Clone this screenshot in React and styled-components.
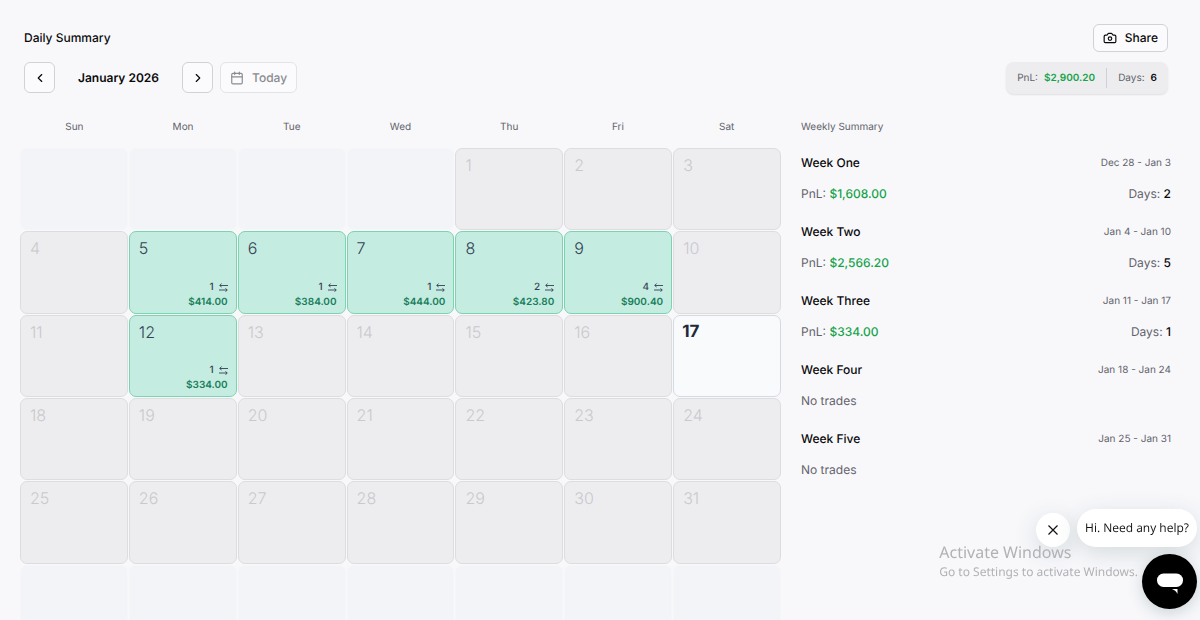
import styled, { createGlobalStyle } from "styled-components";
import { useState } from "react";
import { Calendar, Camera, ChevronLeft, ChevronRight } from "lucide-react";

const GlobalStyle = createGlobalStyle`
  *, *::before, *::after {
    box-sizing: border-box;
  }

  body {
    margin: 0;
    background: #f8f8fb;
    color: #09090b;
    font-family: Inter, "Liberation Sans", sans-serif;
    font-size: 12px;
    line-height: 20px;
    text-rendering: geometricPrecision;
  }

  button {
    font: inherit;
    text-rendering: inherit;
    cursor: pointer;
  }

  h1, h2, h3, p, ul {
    margin: 0;
    padding: 0;
    font: inherit;
    list-style: none;
  }
`;

const Page = styled.main`
  height: 100vh;
  overflow: hidden;
  padding: 24px 29px 0 20px;
`;

const TopBar = styled.header`
  display: flex;
  align-items: center;
  justify-content: space-between;
  padding: 0 3px 0 4px;
  margin-bottom: 10px;
`;

const Title = styled.h1`
  font-weight: 500;
`;

const OutlineButton = styled.button`
  display: flex;
  align-items: center;
  justify-content: center;
  gap: 8px;
  height: ${(props) => props.$height || 31}px;
  padding: 0 9px;
  background: #fbfbfd;
  border: 1px solid #d1d1d6;
  border-radius: 6px;
  color: #09090b;
  font-weight: 500;

  &:disabled {
    border-color: #e4e4e7;
    color: #8b8b90;
    cursor: default;
  }
`;

const SquareButton = styled(OutlineButton)`
  width: 31px;
  padding: 0;
`;

const Toolbar = styled(TopBar)`
  align-items: flex-start;
  margin-bottom: 23px;
`;

const MonthNav = styled.div`
  display: flex;
  align-items: center;
  gap: 7px;
`;

const Month = styled.h2`
  width: 113px;
  text-align: center;
  font-weight: 600;
`;

const Totals = styled.div`
  display: flex;
  align-items: center;
  height: 32px;
  padding: 0 11px;
  background: #ededef;
  border-radius: 8px;
  box-shadow: 0 1px 2px rgba(0, 0, 0, 0.1);
  font-size: 10px;
  color: #63636b;
`;

const Total = styled.span`
  display: flex;
  gap: 6px;

  & + & {
    margin-left: 11px;
    padding-left: 11px;
    border-left: 1px solid #cfcfd4;
  }
`;

const Amount = styled.strong`
  font-weight: ${(props) => props.$weight || 500};
  color: ${(props) => (props.$profit ? "#16a34a" : "#09090b")};
`;

const Content = styled.div`
  display: grid;
  grid-template-columns: 761fr 370fr;
  column-gap: 20px;
  align-items: start;
`;

const Weekdays = styled.div`
  display: grid;
  grid-template-columns: repeat(7, 1fr);
  margin-bottom: 11px;
  text-align: center;
  font-size: 10px;
  color: #63636b;
`;

const Days = styled.div`
  display: grid;
  grid-template-columns: repeat(7, 1fr);
  gap: 1px;
`;

const cellColors = {
  outside: { background: "#f3f4f8", border: "#f5f6f9", text: "transparent" },
  empty: { background: "#ededef", border: "#dddddf", text: "#c9c9cd" },
  profit: { background: "#c5ece0", border: "#7dd3b0", text: "#334155" },
  today: { background: "#f9fafc", border: "#d5dae2", text: "#1e293b" }
};

const Day = styled.div`
  display: flex;
  flex-direction: column;
  justify-content: space-between;
  aspect-ratio: 1.31;
  padding: ${(props) => (props.$kind === "today" ? "6px 8px" : "6px 8px 3px 9px")};
  background: ${(props) => cellColors[props.$kind].background};
  border: 1px solid ${(props) => cellColors[props.$kind].border};
  border-radius: 7px;
  color: ${(props) => cellColors[props.$kind].text};
`;

const DayNumber = styled.span`
  font-size: ${(props) => (props.$today ? 17 : 16)}px;
  font-weight: ${(props) => (props.$today ? 700 : 300)};
`;

const Result = styled.div`
  text-align: right;
  font-size: 10px;
  font-weight: 600;
  line-height: 15px;
  color: #177e5b;
`;

const Trades = styled.div`
  display: flex;
  align-items: center;
  justify-content: flex-end;
  gap: 5px;
  font-weight: 500;
  color: #334155;
`;

const WeeklyTitle = styled.h2`
  margin-bottom: 16px;
  font-size: 10px;
  color: #63636b;
`;

const Weeks = styled.ul`
  display: grid;
  gap: 18px;
`;

const Week = styled.li`
  display: grid;
  gap: 11px;
`;

const WeekRow = styled.div`
  display: flex;
  justify-content: space-between;
  color: #63636b;
`;

const WeekName = styled.h3`
  font-weight: 500;
  color: #09090b;
`;

const WeekRange = styled.span`
  font-size: 10px;
`;

const Chat = styled.aside`
  position: fixed;
  right: 3px;
  bottom: 11px;
  display: flex;
  flex-direction: column;
  align-items: flex-end;
  gap: 7px;
`;

const ChatRow = styled.div`
  display: flex;
  align-items: flex-end;
  gap: 7px;
`;

const ChatBubble = styled.button`
  height: 38px;
  padding: 0 8px;
  background: #fff;
  border: 0;
  border-radius: 19px;
  box-shadow: 0 6px 24px rgba(30, 70, 70, 0.16);
  color: #111;
  font-family: "Open Sans", "Noto Sans", sans-serif;
  font-size: 12px;
  white-space: nowrap;
`;

const ChatDismiss = styled(ChatBubble)`
  display: grid;
  place-items: center;
  width: 34px;
  height: 34px;
  padding: 0;
`;

const ChatLauncher = styled.button`
  width: 55px;
  height: 55px;
  padding: 0;
  background: #000;
  border: 0;
  border-radius: 50%;
  box-shadow: 0 4px 16px rgba(30, 70, 70, 0.2);

  svg {
    display: block;
  }
`;

const Activation = styled.div`
  position: fixed;
  right: 62px;
  bottom: 39px;
  color: #b1b2b5;
  font-family: "Noto Sans", "Open Sans", sans-serif;
  font-size: 12px;
  line-height: 18px;
  pointer-events: none;
`;

const ActivationTitle = styled.p`
  font-size: 16px;
  line-height: 22px;
`;

const weekdays = ["Sun", "Mon", "Tue", "Wed", "Thu", "Fri", "Sat"];

const results = {
  5: { trades: 1, pnl: "$414.00" },
  6: { trades: 1, pnl: "$384.00" },
  7: { trades: 1, pnl: "$444.00" },
  8: { trades: 2, pnl: "$423.80" },
  9: { trades: 4, pnl: "$900.40" },
  12: { trades: 1, pnl: "$334.00" }
};

const weeks = [
  { name: "Week One", range: "Dec 28 - Jan 3", pnl: "$1,608.00", days: 2 },
  { name: "Week Two", range: "Jan 4 - Jan 10", pnl: "$2,566.20", days: 5 },
  { name: "Week Three", range: "Jan 11 - Jan 17", pnl: "$334.00", days: 1 },
  { name: "Week Four", range: "Jan 18 - Jan 24" },
  { name: "Week Five", range: "Jan 25 - Jan 31" }
];

const FIRST_WEEKDAY = 4;
const DAYS_IN_MONTH = 31;
const TODAY = 17;

// six full weeks, days outside the month are null
const cells = Array.from({ length: 42 }, (_, index) => {
  const day = index - FIRST_WEEKDAY + 1;
  return day >= 1 && day <= DAYS_IN_MONTH ? day : null;
});

const getKind = (day) => {
  if (!day) return "outside";
  if (day === TODAY) return "today";
  return results[day] ? "profit" : "empty";
};

const SwapIcon = () => (
  <svg
    width="9"
    height="9"
    viewBox="0 0 9 9"
    fill="none"
    stroke="currentColor"
    strokeWidth="0.9"
    aria-hidden="true"
  >
    <path d="M9 2.500H1M2.600 0.500 0.700 2.500l1.900 1.500M0 7h8M6.400 5.500l1.900 1.500-1.900 1.800" />
  </svg>
);

const CloseIcon = () => (
  <svg width="10" height="10" viewBox="0 0 10 10" stroke="#111" strokeWidth="1.2">
    <path d="M0.5 0.5l9 9M9.5 0.5l-9 9" />
  </svg>
);

const LauncherIcon = () => (
  <svg width="55" height="55" viewBox="0 0 55 55" fill="#fff">
    <rect x="15" y="19.5" width="26" height="13.5" rx="6.5" />
    <path d="M30 35h5.500v5c-.8-2.300-2.800-4-5.500-5z" />
  </svg>
);

const App = () => {
  const [isPromptOpen, setIsPromptOpen] = useState(true);

  return (
    <>
      <GlobalStyle />
      <Page>
        <TopBar>
          <Title>Daily Summary</Title>
          <OutlineButton $height={28}>
            <Camera size={14} />
            Share
          </OutlineButton>
        </TopBar>
        <Toolbar as="div">
          <MonthNav>
            <SquareButton aria-label="Previous month">
              <ChevronLeft size={14} />
            </SquareButton>
            <Month>January 2026</Month>
            <SquareButton aria-label="Next month">
              <ChevronRight size={14} />
            </SquareButton>
            <OutlineButton disabled>
              <Calendar size={14} />
              Today
            </OutlineButton>
          </MonthNav>
          <Totals>
            <Total>
              PnL:
              <Amount $profit $weight={600}>
                $2,900.20
              </Amount>
            </Total>
            <Total>
              Days:
              <Amount $weight={600}>6</Amount>
            </Total>
          </Totals>
        </Toolbar>
        <Content>
          <section>
            <Weekdays>
              {weekdays.map((weekday) => (
                <span key={weekday}>{weekday}</span>
              ))}
            </Weekdays>
            <Days>
              {cells.map((day, index) => (
                <Day key={index} $kind={getKind(day)}>
                  {day && <DayNumber $today={day === TODAY}>{day}</DayNumber>}
                  {results[day] && (
                    <Result>
                      <Trades>
                        {results[day].trades}
                        <SwapIcon />
                      </Trades>
                      {results[day].pnl}
                    </Result>
                  )}
                </Day>
              ))}
            </Days>
          </section>
          <section>
            <WeeklyTitle>Weekly Summary</WeeklyTitle>
            <Weeks>
              {weeks.map((week) => (
                <Week key={week.name}>
                  <WeekRow>
                    <WeekName>{week.name}</WeekName>
                    <WeekRange>{week.range}</WeekRange>
                  </WeekRow>
                  {week.pnl ? (
                    <WeekRow>
                      <span>
                        PnL: <Amount $profit>{week.pnl}</Amount>
                      </span>
                      <span>
                        Days: <Amount>{week.days}</Amount>
                      </span>
                    </WeekRow>
                  ) : (
                    <WeekRow>No trades</WeekRow>
                  )}
                </Week>
              ))}
            </Weeks>
          </section>
        </Content>
      </Page>
      <Chat>
        {isPromptOpen && (
          <ChatRow>
            <ChatDismiss
              aria-label="Dismiss message"
              onClick={() => setIsPromptOpen(false)}
            >
              <CloseIcon />
            </ChatDismiss>
            <ChatBubble>Hi. Need any help?</ChatBubble>
          </ChatRow>
        )}
        <ChatLauncher aria-label="Open chat">
          <LauncherIcon />
        </ChatLauncher>
      </Chat>
      <Activation>
        <ActivationTitle>Activate Windows</ActivationTitle>
        <p>Go to Settings to activate Windows.</p>
      </Activation>
    </>
  );
};

export default App;
